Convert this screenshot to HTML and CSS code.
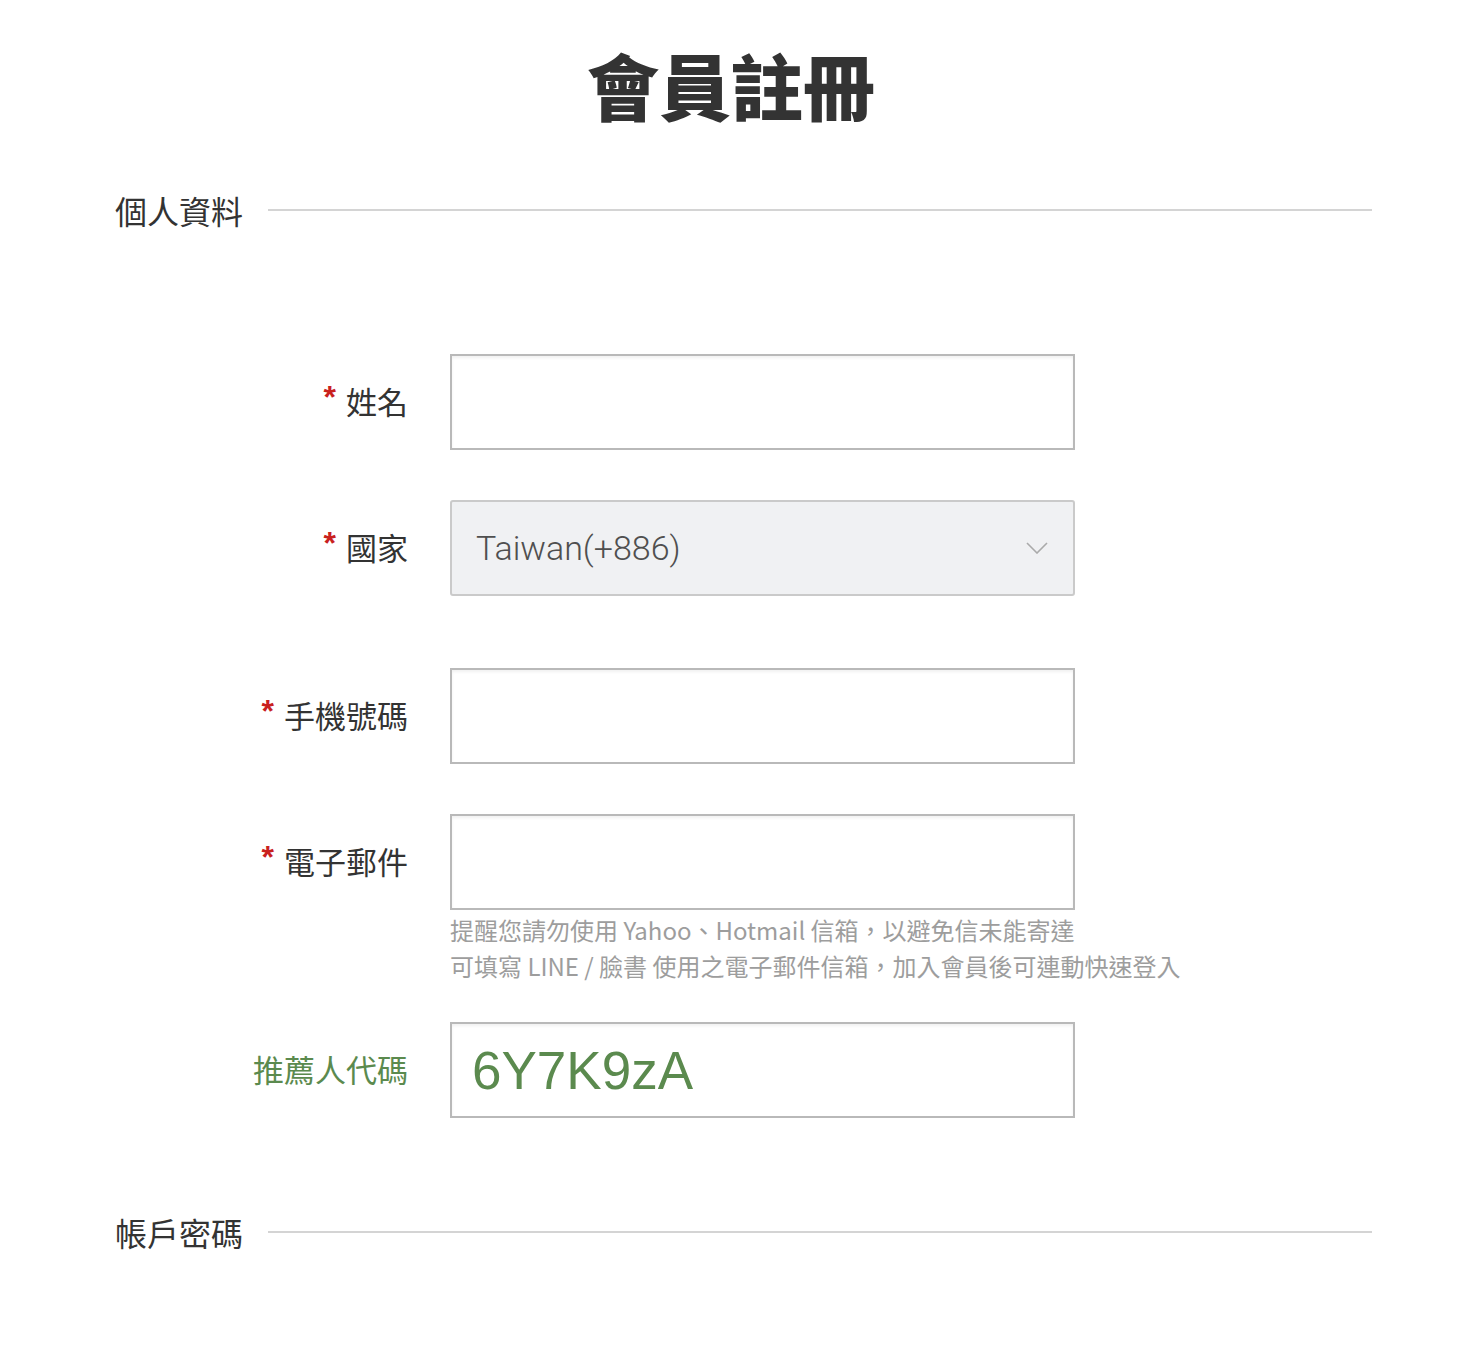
FILE: index.html
```html
<!DOCTYPE html>
<html lang="zh-Hant">
<head>
    <meta charset="UTF-8">
    <meta name="viewport" content="width=device-width, initial-scale=1.0">
    <title>會員註冊</title>
    <link rel="stylesheet" href="styles.css">
</head>
<body>
    <main class="page">
        <h1 class="page-title">會員註冊</h1>

        <section class="block">
            <div class="block-head">
                <h2>個人資料</h2>
                <span class="block-line"></span>
            </div>

            <form class="reg-form" action="#" method="post">
                <div class="field">
                    <label class="field-label" for="name"><span class="req">*</span>姓名</label>
                    <div class="field-body">
                        <input class="field-input" type="text" id="name" name="name">
                    </div>
                </div>

                <div class="field field-country">
                    <label class="field-label" for="country"><span class="req">*</span>國家</label>
                    <div class="field-body">
                        <div class="select-wrap">
                            <select class="field-select" id="country" name="country">
                                <option>Taiwan(+886)</option>
                            </select>
                            <!-- flecha del select -->
                            <svg class="select-arrow" width="22" height="12" viewBox="0 0 22 12">
                                <path d="M1 1 L11 11 L21 1" fill="none" stroke="#aaaaaa" stroke-width="1.6"/>
                            </svg>
                        </div>
                    </div>
                </div>

                <div class="field">
                    <label class="field-label" for="phone"><span class="req">*</span>手機號碼</label>
                    <div class="field-body">
                        <input class="field-input" type="text" id="phone" name="phone">
                    </div>
                </div>

                <div class="field field-email">
                    <label class="field-label" for="email"><span class="req">*</span>電子郵件</label>
                    <div class="field-body">
                        <input class="field-input" type="text" id="email" name="email">
                        <p class="field-hint">提醒您請勿使用 Yahoo、Hotmail 信箱，以避免信未能寄達<br>可填寫 LINE / 臉書 使用之電子郵件信箱，加入會員後可連動快速登入</p>
                    </div>
                </div>

                <div class="field field-ref">
                    <label class="field-label label-green" for="ref">推薦人代碼</label>
                    <div class="field-body">
                        <input class="field-input input-ref" type="text" id="ref" name="ref" value="6Y7K9zA">
                    </div>
                </div>
            </form>
        </section>

        <section class="block block-account">
            <div class="block-head">
                <h2>帳戶密碼</h2>
                <span class="block-line"></span>
            </div>
        </section>
    </main>
</body>
</html>
```

FILE: styles.css
```css
body {
    margin: 0;
    padding: 0;
    background-color: #ffffff;
    color: #333333;
    font-family: "Noto Sans CJK TC", "Noto Sans", sans-serif;
}

.page {
    padding: 0 100px 60px 115px;
}

.page-title {
    margin: 40px 0 0;
    font-size: 72px;
    line-height: 88px;
    font-weight: 900;
    text-align: center;
    color: #333333;
    padding-right: 25px;
}

.block-head {
    display: flex;
    align-items: center;
    height: 40px;
    margin-top: 62px;
}

.block-head h2 {
    margin: 0;
    font-size: 32px;
    font-weight: normal;
    line-height: 40px;
    color: #333333;
}

.block-line {
    flex: 1;
    height: 2px;
    margin-left: 25px;
    background-color: #d4d4d4;
}

.reg-form {
    margin-top: 124px;
}

.field {
    display: flex;
    align-items: flex-start;
    margin-bottom: 50px;
}

.field-country {
    margin-bottom: 72px;
}

.field-email {
    margin-bottom: 38px;
}

.field-label {
    width: 293px;
    height: 96px;
    box-sizing: border-box;
    padding-bottom: 3px;
    display: flex;
    align-items: center;
    justify-content: flex-end;
    font-size: 31px;
    color: #333333;
}

.req {
    font-family: "Liberation Sans", sans-serif;
    font-weight: bold;
    font-size: 32px;
    color: #c9211e;
    margin-right: 10px;
    position: relative;
    top: -3px;
}

.label-green {
    color: #5b8a4e;
}

.field-body {
    margin-left: 42px;
    width: 625px;
}

.field-input {
    display: block;
    width: 100%;
    height: 96px;
    box-sizing: border-box;
    border: 2px solid #b9b9b9;
    border-radius: 0;
    box-shadow: inset 0 2px 3px rgba(0, 0, 0, 0.06);
    padding: 0 22px;
    font-size: 30px;
    color: #333333;
    background-color: #ffffff;
    outline: none;
}

.input-ref {
    font-family: "Liberation Sans", Arial, sans-serif;
    font-size: 53px;
    color: #5b8a4e;
    padding-left: 20px;
}

.select-wrap {
    position: relative;
}

.field-select {
    display: block;
    width: 100%;
    height: 96px;
    box-sizing: border-box;
    appearance: none;
    -webkit-appearance: none;
    border: 2px solid #cacaca;
    border-radius: 3px;
    background-color: #f0f1f3;
    padding: 0 24px;
    font-family: Roboto, "Noto Sans", sans-serif;
    font-size: 34px;
    font-weight: 300;
    color: #4f4f4f;
    outline: none;
}

.select-arrow {
    position: absolute;
    right: 27px;
    top: 42px;
    pointer-events: none;
}

.field-hint {
    margin: 2px 0 0;
    width: 760px;
    font-size: 24px;
    line-height: 36px;
    color: #9d9d9d;
}

.block-account .block-head {
    margin-top: 94px;
}
```
